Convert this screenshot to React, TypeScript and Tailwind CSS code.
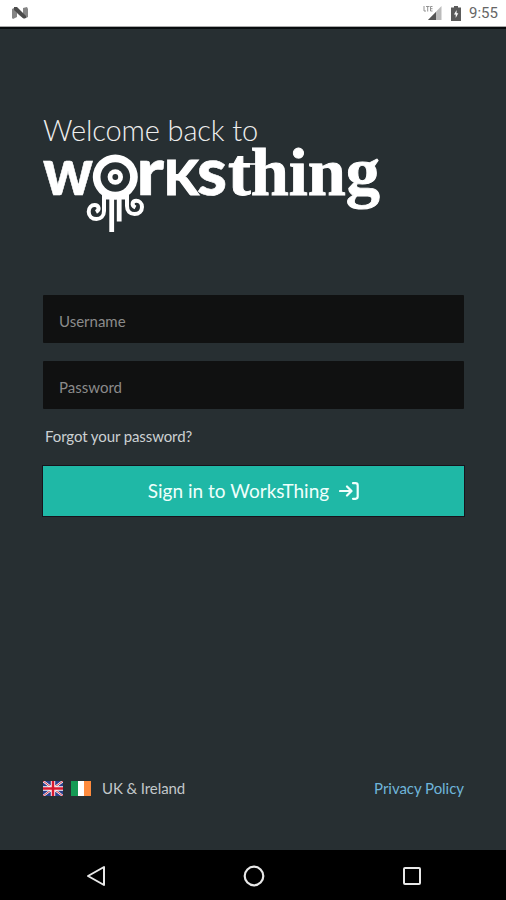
import React, { useState } from 'react';

function StatusBar() {
  return (
    <header className="h-[27px] shrink-0 bg-white border-b border-[#aaa] flex items-center justify-between pl-[11px] pr-2 text-[#666]">
      <svg width="18" height="14" viewBox="0 0 18 14" className="-mt-px">
        <path d="M1 3 5 1 9 5 12 8V2l4-1 1 2v8l-4 2-5-4-2-2v4l-4 2-1-1Z" fill="#858585" />
        <path d="M3 1h3l9 9v2h-3L3 4Z" fill="#4b4b4b" />
      </svg>
      <div className="flex items-center">
        <svg width="20" height="16" viewBox="0 0 20 16">
          <path d="M18.500 1v14H5Z" fill="#bbb" />
          <path d="M13 7v8H5Z" fill="#555" />
          <path d="M1 1v5h2M3 1.500h3.500M4.700 1.500v5M9.500 1.500h-2V6h2M7.500 3.700h2" stroke="#888" fill="none" strokeWidth=".9" />
        </svg>
        <svg width="10" height="15" viewBox="0 0 10 15" className="ml-[8px]">
          <path d="M3 0h4v1.500h3V15H0V1.500h3Z" fill="#5b5b5b" />
          <path d="M5.600 4 3 8.500h1.700V12L7.300 7.300H5.600Z" fill="#fff" />
        </svg>
        <span className="ml-[8px] w-[29px] font-['Roboto'] text-[15px] leading-none">9:55</span>
      </div>
    </header>
  );
}

function Logo() {
  return (
    <svg width="340" height="88" viewBox="42 146 340 88" fill="#fff" className="-ml-px block overflow-visible">
      <g fontFamily="Lato, sans-serif" fontWeight="900" stroke="#fff" strokeWidth=".6">
        <text x="43" y="195" fontSize="67" textLength="50" lengthAdjust="spacingAndGlyphs">w</text>
        <text x="136.500" y="195" fontSize="67" textLength="27.500" lengthAdjust="spacingAndGlyphs">r</text>
        <text x="164" y="195" fontSize="47" textLength="34.500" lengthAdjust="spacingAndGlyphs" strokeWidth="1.200">K</text>
        <text x="197" y="195" fontSize="66" textLength="30" lengthAdjust="spacingAndGlyphs">s</text>
      </g>
      <text x="228" y="195" fontSize="67" fontWeight="700" fontFamily="'Liberation Serif', serif" textLength="152" lengthAdjust="spacingAndGlyphs" stroke="#fff" strokeWidth=".9">thing</text>
      <path d="M229 163.200h27v1.600h-27Z" />
      {/* octopus eye */}
      <circle cx="115.300" cy="177" r="24.500" fill="#272f32" />
      <path d="M102 190h27v9.500h-27Z" />
      <circle cx="115.300" cy="177" r="22.500" />
      <circle cx="115.300" cy="177" r="14.800" fill="#272f32" />
      <circle cx="115.300" cy="177" r="7.700" />
      <circle cx="115.300" cy="177" r="2.900" fill="#272f32" />
      {/* tentacles */}
      <g fill="none" stroke="#fff" strokeWidth="4">
        <path d="M111.700 197V232M119.200 197V221.500" strokeWidth="4.800" />
        <path d="M104 196V211C104 216 100.500 219 96.500 219C92 219 88.700 216 88.700 211.700C88.700 207.500 91.500 205 94.700 205C98.500 205 100.500 209.500 96 212" />
        <path d="M127 196V206C127 211 130 214 134.500 214C139 214 142 211 142 207C142 203 139 200.800 136.200 200.800C132.500 200.800 130.700 205 135.500 207.500" />
      </g>
    </svg>
  );
}

function UkFlag() {
  return (
    <svg width="20" height="15" viewBox="0 0 20 15">
      <path d="M0 0h20v15H0Z" fill="#2b3f8c" />
      <path d="m0 0 20 15M20 0 0 15" stroke="#fff" strokeWidth="2.200" />
      <path d="m0 0 20 15M20 0 0 15" stroke="#d22f43" strokeWidth="1" />
      <path d="M10 0v15M0 7.500h20" stroke="#fff" strokeWidth="4.400" />
      <path d="M10 0v15M0 7.500h20" stroke="#d7182f" strokeWidth="2.600" />
    </svg>
  );
}

function IrelandFlag() {
  return (
    <div className="ml-[8px] flex h-[15px] w-[20px]">
      <div className="flex-1 bg-[#169b55]" />
      <div className="flex-1 bg-white" />
      <div className="flex-1 bg-[#ff8b3d]" />
    </div>
  );
}

export default function App() {
  const [username, setUsername] = useState('');
  const [password, setPassword] = useState('');

  const inputClass =
    'block h-[48px] w-full rounded-[1px] bg-[#101111] px-[16px] pt-[3px] text-[15px] text-[#ccc] placeholder:text-[#8b8b8b] outline-none';

  return (
    <div className="flex h-[900px] w-[506px] flex-col overflow-hidden bg-[#272f32] font-['Lato',sans-serif]">
      <StatusBar />
      <main className="flex flex-1 flex-col border-t-2 border-[#080c0e] pl-[43px] pr-[42px]">
        <h1 className="mt-[83px] h-[34px] whitespace-nowrap text-[29px] font-light leading-[36px] tracking-[-0.12px] text-[#eee]">
          Welcome back to
        </h1>
        <Logo />

        <form className="mt-[61px]" onSubmit={(e) => e.preventDefault()}>
          <input
            className={inputClass}
            placeholder="Username"
            value={username}
            onChange={(e) => setUsername(e.target.value)}
          />
          <input
            type="password"
            className={`${inputClass} mt-[18px]`}
            placeholder="Password"
            value={password}
            onChange={(e) => setPassword(e.target.value)}
          />
          <a href="#" className="mt-[16px] ml-[2px] block w-fit text-[15px] leading-[22px] tracking-[-0.1px] text-[#ccd1d3]">
            Forgot your password?
          </a>
          <button className="mt-[19px] flex h-[50px] w-full items-center justify-center bg-[#1fb8a6] text-[19px] tracking-[0.02px] text-[#effffc] ring-1 ring-[#17131c]">
            Sign in to WorksThing
            <svg width="20" height="18" viewBox="0 0 20 18" fill="none" stroke="currentColor" strokeWidth="2.200" strokeLinecap="round" strokeLinejoin="round" className="ml-[10px]">
              <path d="M1 9h11M8 4.500 12.500 9 8 13.500M14 1.200h2.500q2.200 0 2.200 2.200v11.200q0 2.200-2.200 2.200H14" />
            </svg>
          </button>
        </form>

        <div className="mt-auto mb-[51px] flex items-center justify-between text-[15px] leading-[22px]">
          <div className="flex items-center text-[#c2c7ca]">
            <UkFlag />
            <IrelandFlag />
            <span className="ml-[11px] -mt-px tracking-[-0.1px]">UK &amp; Ireland</span>
          </div>
          <a href="#" className="-mt-px text-[#6fb5da] tracking-[-0.04px]">Privacy Policy</a>
        </div>
      </main>
      <nav className="grid h-[50px] shrink-0 grid-cols-[191px_126px_189px] place-items-center bg-black pt-px">
        <svg width="20" height="22" viewBox="0 0 20 22" fill="none" stroke="#e8e8e8" strokeWidth="2" strokeLinejoin="round">
          <path d="M18 2v18L2 11Z" />
        </svg>
        <svg width="22" height="22" viewBox="0 0 22 22" fill="none" stroke="#e8e8e8" strokeWidth="2.200">
          <circle cx="11" cy="11" r="9.300" />
        </svg>
        <div className="h-[18px] w-[18px] rounded-[2px] border-2 border-[#e8e8e8]" />
      </nav>
    </div>
  );
}
